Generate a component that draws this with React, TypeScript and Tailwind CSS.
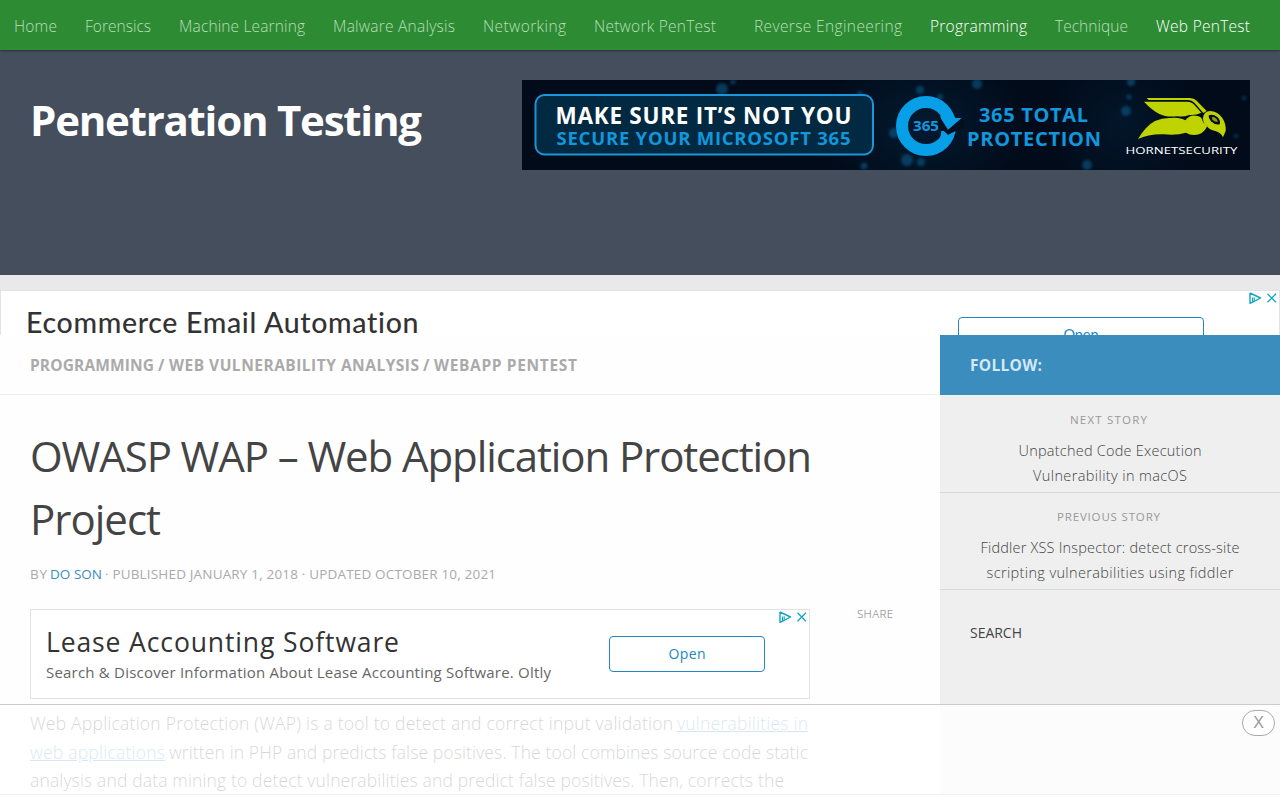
import { useLayoutEffect, useRef, useState } from "react";
import type { ReactNode } from "react";

/** A single line of text tracked so that it spans exactly `width` pixels. */
function Line({
  width,
  className = "",
  underline = false,
  children,
}: {
  width: number;
  className?: string;
  underline?: boolean;
  children: ReactNode;
}) {
  const ref = useRef<HTMLSpanElement>(null);
  const [tracking, setTracking] = useState(0);
  useLayoutEffect(() => {
    const el = ref.current;
    if (!el) return;
    el.style.letterSpacing = "0px";
    const natural = el.getBoundingClientRect().width;
    const count = (el.textContent ?? "").length;
    const next = (width - natural) / Math.max(1, count - 1);
    el.style.letterSpacing = `${next}px`;
    setTracking(next);
  }, [width]);
  return (
    <span className={`block whitespace-nowrap ${className}`} style={{ width }}>
      <span
        ref={ref}
        className={`inline-block whitespace-nowrap ${underline ? "underline" : ""}`}
        style={{ letterSpacing: tracking }}
      >
        {children}
      </span>
    </span>
  );
}

const navItems = [
  { label: "Home", width: 43 },
  { label: "Forensics", width: 66 },
  { label: "Machine Learning", width: 126 },
  { label: "Malware Analysis", width: 122 },
  { label: "Networking", width: 83 },
  { label: "Network PenTest", width: 122 },
  { label: "Reverse Engineering", width: 148, wide: true },
  { label: "Programming", width: 97, active: true },
  { label: "Technique", width: 73 },
  { label: "Web PenTest", width: 94, active: true },
];

function Nav() {
  return (
    <nav className="relative z-10 flex h-[50px] items-center gap-7 bg-[#2d8c33] pt-[3px] pl-3.5 text-[15.5px] font-light shadow-[0_1px_2px_rgba(0,0,0,0.4)]">
      {navItems.map((item) => (
        <a key={item.label} className={`${item.active ? "text-white" : "text-[#b9deba]"} ${item.wide ? "ml-2.5" : ""}`}>
          <Line width={item.width}>{item.label}</Line>
        </a>
      ))}
    </nav>
  );
}

const sparks = [
  [211, 2, 2.5], [338, 14, 3], [342, 86, 3.5], [200, 9, 6], [398, 10, 4], [418, 17, 3], [455, 4, 5], [385, 80, 6],
  [399, 82, 4], [604, 31, 5], [607, 17, 2.5], [609, 2, 4], [722, 18, 2], [714, 56, 2], [565, 85, 5], [372, 53, 5],
];

function Banner() {
  return (
    <svg width="728" height="90" viewBox="0 0 728 90" className="block shrink-0 font-['Open_Sans',sans-serif]">
      <defs>
        <filter id="glow" x="-50%" y="-50%" width="200%" height="200%">
          <feGaussianBlur stdDeviation="1.8" />
        </filter>
        <radialGradient id="night">
          <stop offset="0" stopColor="#04203a" />
          <stop offset="1" stopColor="#010b19" />
        </radialGradient>
      </defs>
      <rect width="728" height="90" fill="#010b19" />
      <ellipse cx="400" cy="45" rx="110" ry="80" fill="url(#night)" opacity="0.7" />
      <ellipse cx="600" cy="45" rx="80" ry="80" fill="url(#night)" opacity="0.5" />
      <g fill="#0b6b9e" opacity="0.5" filter="url(#glow)">
        {sparks.map(([x, y, r]) => (
          <circle key={`${x}-${y}`} cx={x} cy={y} r={r} />
        ))}
      </g>
      <rect x="13.5" y="15" width="337.5" height="59.5" rx="9" fill="#022942" stroke="#1c96d8" strokeWidth="2" />
      <g fontWeight="700">
        <text x="33.5" y="43.7" fontSize="22.5" fill="#fff" textLength="296" lengthAdjust="spacing">MAKE SURE IT’S NOT YOU</text>
        <text x="34.5" y="64.5" fontSize="18.5" fill="#1296dc" textLength="294" lengthAdjust="spacing">SECURE YOUR MICROSOFT 365</text>
      </g>
      <g transform="translate(358 -5) scale(0.33333)">
        <circle cx="138" cy="153" r="72" fill="none" stroke="#079fe8" strokeWidth="36" />
        <path d="M178 128H252V158L223 170L204 180L188 165L176 160Z" fill="#02101f" />
        <path d="M180 122H222L226 129H245L204 164L184 133Z" fill="#079fe8" />
        <path d="M184 168L191 168L204 181L222 171L205 200L180 195Z" fill="#079fe8" />
      </g>
      <g fill="#1296dc" fontWeight="700">
        <text x="391" y="51" fontSize="15" textLength="26" lengthAdjust="spacingAndGlyphs">365</text>
        <text x="457" y="41.5" fontSize="20" textLength="109" lengthAdjust="spacing">365 TOTAL</text>
        <text x="445" y="65.8" fontSize="20" textLength="134" lengthAdjust="spacing">PROTECTION</text>
      </g>
      <g transform="translate(358 -5) scale(0.33333)" fill="#bfd300">
        <path d="M800 69H930Q942 69 950 77L980 108L970 114L944 84Q936 75 924 75H806Z" />
        <path d="M792 80H922Q936 80 944 91L964 113Q950 121 928 120Q912 126 890 124Q858 127 838 117Q814 104 792 80Z" />
        <path d="M774 192Q798 152 825 138Q848 128 872 129Q900 126 916 136Q928 120 946 122Q960 122 966 132Q968 145 982 153Q970 180 942 180Q928 180 918 173Q890 182 850 178Q805 177 774 192Z" />
        <path d="M969 128Q972 109 990 108Q1012 108 1027 129Q1039 147 1037 168L1029 187Q1022 172 1006 168Q988 165 980 152Q968 145 969 128Z" />
        <path d="M986 121Q998 115 1012 126Q1023 137 1019 148Q1005 151 993 139Q985 130 986 121Z" fill="#010b19" />
        <path d="M995 127Q1003 124 1010 132Q1014 138 1013 141Q1004 141 997 134Z" fill="#8c9c10" />
      </g>
      <text x="603.5" y="74" fontSize="9" fill="#fff" fontWeight="500" textLength="112" lengthAdjust="spacingAndGlyphs">HORNETSECURITY</text>
    </svg>
  );
}

function AdChoices() {
  return (
    <svg width="30" height="14" viewBox="0 0 30 14" fill="none" stroke="#12a5c6" className="block">
      <path d="M2 2V12.4L4.6 11.2V6.6M2 2L12.5 7L5.2 10.8" strokeWidth="1.4" strokeLinejoin="round" />
      <path d="M6.3 6.4V9.4" strokeWidth="1" />
      <path d="M19.5 2.8L28 11.3M28 2.8L19.5 11.3" strokeWidth="1.3" />
    </svg>
  );
}

function TopAd() {
  return (
    <div className="relative flex h-[45px] shrink-0 items-start overflow-hidden border-x border-t border-[#e2e2e4] bg-white">
      <div className="pt-[13px] pl-[25px] font-['Lato',sans-serif] text-[28.5px] leading-9 font-medium text-[#333]">
        <Line width={393}>Ecommerce Email Automation</Line>
      </div>
      <div className="mt-[26px] ml-[539px] flex h-9 w-[246px] justify-center rounded border border-[#2585c5] font-['Lato',sans-serif] text-[14.5px] leading-[33px] text-[#2585c5]">
        <Line width={35}>Open</Line>
      </div>
      <div className="absolute top-0 right-px">
        <AdChoices />
      </div>
    </div>
  );
}

function InlineAd() {
  return (
    <div className="relative flex h-[90px] w-[780px] items-start border border-[#e2e2e2] bg-white font-['Open_Sans',sans-serif]">
      <div className="pt-[14px] pl-[15px]">
        <Line width={353} className="text-[26.5px] leading-9 text-[#333]">Lease Accounting Software</Line>
        <Line width={505} className="text-[15px] leading-6 text-[#666]">
          Search &amp; Discover Information About Lease Accounting Software. Oltly
        </Line>
      </div>
      <div className="mt-[26px] ml-[58px] flex h-9 w-[156px] justify-center rounded border border-[#2585c5] text-[14px] leading-[34px] text-[#2585c5]">
        <Line width={37}>Open</Line>
      </div>
      <div className="absolute top-0 right-px">
        <AdChoices />
      </div>
    </div>
  );
}

function Article() {
  return (
    <main className="w-[940px] shrink-0 bg-[#fefefe]">
      <div className="flex h-[60px] gap-1 border-b border-[#eee] pl-[30px] text-[15.5px] leading-[60px] font-bold text-[#aaa]">
        <Line width={124}>PROGRAMMING</Line>
        <Line width={7}>/</Line>
        <Line width={250}>WEB VULNERABILITY ANALYSIS</Line>
        <Line width={7}>/</Line>
        <Line width={143}>WEBAPP PENTEST</Line>
      </div>
      <div className="pt-[29px] pl-[30px]">
        <h1 className="text-[42px] leading-[63px] text-[#444]">
          <Line width={782}>OWASP WAP – Web Application Protection</Line>
          <Line width={131}>Project</Line>
        </h1>
        <div className="mt-[14px] flex gap-[3px] text-[13.5px] leading-5 text-[#aaa]">
          <Line width={17}>BY</Line>
          <Line width={52} className="text-[#3b8dbd]">DO SON</Line>
          <Line width={391}>· PUBLISHED JANUARY 1, 2018 · UPDATED OCTOBER 10, 2021</Line>
        </div>
        <div className="mt-[25px] flex gap-[47px]">
          <InlineAd />
          <Line width={36} className="text-[11.5px] leading-[10px] font-light text-[#777]">SHARE</Line>
        </div>
        <div className="mt-2.5 text-[17.5px] leading-[28.6px] font-light text-[#333]">
          <div className="flex gap-1">
            <Line width={643}>Web Application Protection (WAP) is a tool to detect and correct input validation</Line>
            <Line width={131} underline className="text-[#3b8dbd]">vulnerabilities in</Line>
          </div>
          <div className="flex gap-1">
            <Line width={135} underline className="text-[#3b8dbd]">web applications</Line>
            <Line width={639}>written in PHP and predicts false positives. The tool combines source code static</Line>
          </div>
          <Line width={754}>analysis and data mining to detect vulnerabilities and predict false positives. Then, corrects the</Line>
        </div>
      </div>
    </main>
  );
}

function Story({ label, labelWidth, lines }: { label: string; labelWidth: number; lines: [string, number][] }) {
  return (
    <div className="flex flex-col items-center border-b border-[#d9d9d9]">
      <Line width={labelWidth} className="mt-[14px] mr-[3px] text-[11.5px] leading-5 text-[#999]">{label}</Line>
      <div className="mt-2 mb-1 flex flex-col items-center text-[14.5px] leading-[25px] font-light text-[#444]">
        {lines.map(([text, width]) => (
          <Line key={text} width={width}>{text}</Line>
        ))}
      </div>
    </div>
  );
}

function Sidebar() {
  return (
    <aside className="flex-1 bg-[#efefef]">
      <div className="mb-px h-[60px] bg-[#3b8dbd] pl-[30px] text-[15.5px] leading-[60px] font-bold text-[#d4e8f5]">
        <Line width={72}>FOLLOW:</Line>
      </div>
      <Story label="NEXT STORY" labelWidth={77} lines={[["Unpatched Code Execution", 183], ["Vulnerability in macOS", 154]]} />
      <Story
        label="PREVIOUS STORY"
        labelWidth={103}
        lines={[["Fiddler XSS Inspector: detect cross-site", 259], ["scripting vulnerabilities using fiddler", 247]]}
      />
      <div className="pt-[33px] pl-[30px] text-[14px] leading-5 text-[#444]">
        <Line width={52}>SEARCH</Line>
      </div>
    </aside>
  );
}

function BottomBar() {
  return (
    <div className="absolute inset-x-0 top-[704px] flex h-24 flex-col">
      <div className="flex flex-1 justify-end border-t border-b border-t-[#ccc] border-b-[#f1f1f1] bg-white/80 pt-[5px] pr-[5px]">
        <button className="h-[26px] w-[33px] rounded-[13px] border border-[#aaa] bg-white text-center font-['Liberation_Sans',sans-serif] text-[16px] leading-6 text-[#999]">
          X
        </button>
      </div>
      <div className="h-[5px] bg-white" />
    </div>
  );
}

export default function App() {
  return (
    <div className="relative flex h-[800px] w-[1280px] flex-col overflow-hidden bg-[#e9e9e9] font-['Open_Sans',sans-serif]">
      <Nav />
      <header className="flex h-[225px] shrink-0 items-start justify-between bg-[#454e5c] px-[30px] pt-[30px]">
        <h1 className="pt-[10px] text-[42px] leading-[60px] font-bold text-white">
          <Line width={392}>Penetration Testing</Line>
        </h1>
        <Banner />
      </header>
      <div className="h-[15px] shrink-0" />
      <TopAd />
      <div className="flex flex-1">
        <Article />
        <Sidebar />
      </div>
      <BottomBar />
    </div>
  );
}
